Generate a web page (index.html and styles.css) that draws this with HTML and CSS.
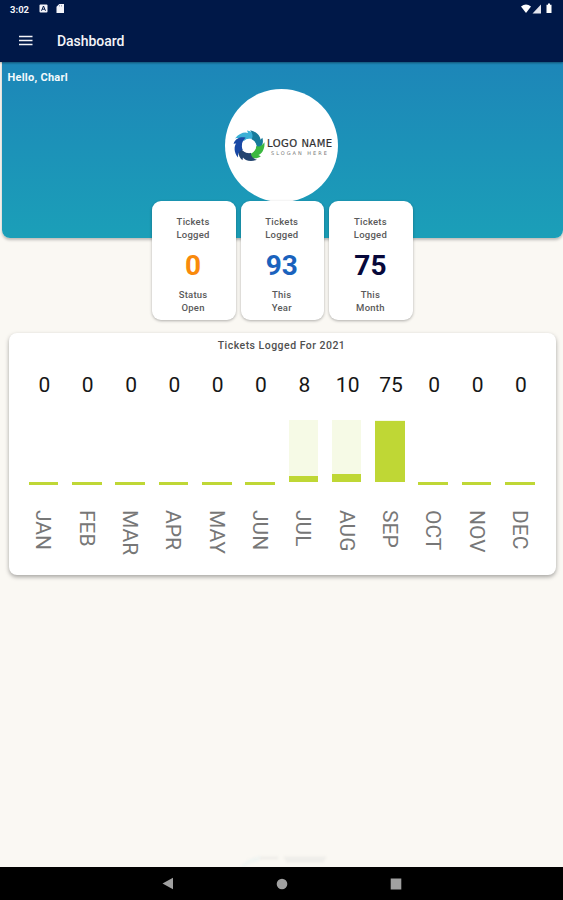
FILE: index.html
```html
<!DOCTYPE html>
<html lang="en">
<head>
<meta charset="utf-8">
<title>Dashboard</title>
<link rel="stylesheet" href="styles.css">
</head>
<body>
<header class="appbar">
  <div class="status">
    <span class="clock">3:02</span>
    <svg class="status-left" width="28" height="12" viewBox="0 0 28 12">
      <rect x="0.5" y="1.5" width="8" height="8" rx="1" fill="#f3f4fa"/>
      <path d="M2.5 7.8 4.5 3 6.5 7.8M3.2 6.2h2.6" fill="none" stroke="#001848"/>
      <path d="M17.5 3.7 20.3 1H25v9h-7.500z" fill="#f3f4fa"/>
      <path d="M20.500 2v1.500M22.500 2v1.500" stroke="#8088a5" stroke-width=".7"/>
    </svg>
    <svg class="status-right" width="34" height="12" viewBox="0 0 34 12">
      <path d="M2 3.500Q7-.5 12 3.500L7 10z" fill="#fff"/>
      <path d="M13.500 10.500 22 1.500v9z" fill="#e3e5ee"/>
      <path d="M27.500 1.800h1.500V.5h2v1.300h1.500v8.200h-5z" fill="#fff"/>
    </svg>
  </div>
  <div class="toolbar">
    <svg width="14" height="11" viewBox="0 0 14 11"><path d="M0 1.500h13.500M0 5.500h13.500M0 9.500h13.500" stroke="#f4f4f8" stroke-width="1.500"/></svg>
    <h1>Dashboard</h1>
  </div>
</header>
<main>
  <section class="hero">
    <p class="hello">Hello, Charl</p>
    <div class="avatar">
      <svg class="swirl" width="32" height="32" viewBox="-16 -16 32 32">
        <path fill="#3ab0d6" d="M-14-7.500C-10-13-4-14.500-1-13L-2-15.500C4-15 7-10 7-5.500C3-8-2-8-5-4.500C-7-8-10-8.500-14-7.500z"/>
        <path fill="#167b9a" transform="rotate(66)" d="M-14-7.500C-10-13-4-14.500-1-13L-2-15.500C4-15 7-10 7-5.500C3-8-2-8-5-4.500C-7-8-10-8.500-14-7.500z"/>
        <path fill="#3cb840" transform="rotate(138)" d="M-14-7.500C-10-13-4-14.500-1-13L-2-15.500C4-15 7-10 7-5.500C3-8-2-8-5-4.500C-7-8-10-8.500-14-7.500z"/>
        <path fill="#25456f" transform="rotate(212)" d="M-14-7.500C-10-13-4-14.500-1-13L-2-15.500C4-15 7-10 7-5.500C3-8-2-8-5-4.500C-7-8-10-8.500-14-7.500z"/>
        <path fill="#1948a5" transform="rotate(286)" d="M-14-7.500C-10-13-4-14.500-1-13L-2-15.500C4-15 7-10 7-5.500C3-8-2-8-5-4.500C-7-8-10-8.500-14-7.500z"/>
        <circle r="7.200" fill="#fff"/>
      </svg>
      <div class="brand"><b>LOGO NAME</b><span>SLOGAN HERE</span></div>
    </div>
  </section>
  <section class="stats">
    <article><p>Tickets<br>Logged</p><strong class="open">0</strong><p>Status<br>Open</p></article>
    <article><p>Tickets<br>Logged</p><strong class="year">93</strong><p>This<br>Year</p></article>
    <article><p>Tickets<br>Logged</p><strong class="month">75</strong><p>This<br>Month</p></article>
  </section>
  <section class="chart">
    <h2>Tickets Logged For 2021</h2>
    <div class="months">
      <div class="col"><span class="val">0</span><div class="bar zero"></div><span class="name">JAN</span></div>
      <div class="col"><span class="val">0</span><div class="bar zero"></div><span class="name">FEB</span></div>
      <div class="col"><span class="val">0</span><div class="bar zero"></div><span class="name">MAR</span></div>
      <div class="col"><span class="val">0</span><div class="bar zero"></div><span class="name">APR</span></div>
      <div class="col"><span class="val">0</span><div class="bar zero"></div><span class="name">MAY</span></div>
      <div class="col"><span class="val">0</span><div class="bar zero"></div><span class="name">JUN</span></div>
      <div class="col"><span class="val">8</span><div class="bar"><i style="height:6.500px"></i></div><span class="name">JUL</span></div>
      <div class="col"><span class="val">10</span><div class="bar"><i style="height:8px"></i></div><span class="name">AUG</span></div>
      <div class="col"><span class="val">75</span><div class="bar"><i style="height:61px"></i></div><span class="name">SEP</span></div>
      <div class="col"><span class="val">0</span><div class="bar zero"></div><span class="name">OCT</span></div>
      <div class="col"><span class="val">0</span><div class="bar zero"></div><span class="name">NOV</span></div>
      <div class="col"><span class="val">0</span><div class="bar zero"></div><span class="name">DEC</span></div>
    </div>
  </section>
</main>
<div class="watermark">
  <svg width="88" height="14" viewBox="0 0 88 14"><path d="M0 14Q9 4 21 3L18 9Q10 9 5 14z" fill="#f0f4f1"/><path d="M20 5h18M44 5h42M46 8h38" stroke="#efeeea" stroke-width="3"/></svg>
</div>
<nav class="navbar">
  <svg width="12" height="13" viewBox="0 0 12 13"><path d="M.5 6.500 11 .7v11.600z" fill="#a0a0a0"/></svg>
  <svg width="12" height="12" viewBox="0 0 12 12"><circle cx="6" cy="6" r="5.300" fill="#a0a0a0"/></svg>
  <svg width="12" height="12" viewBox="0 0 12 12"><path d="M.7.500h10.600v11H.7z" fill="#a0a0a0"/></svg>
</nav>
</body>
</html>
```
FILE: styles.css
```css
* { box-sizing: border-box; }
body {
  margin: 0;
  height: 900px;
  display: flex;
  flex-direction: column;
  background: #faf8f3;
  font-family: Roboto, "Liberation Sans", sans-serif;
  overflow: hidden;
}
h1, h2, p { margin: 0; }
svg { display: block; flex: none; }
.appbar { height: 62px; background: #001848; color: #f4f4f8; box-shadow: 0 1px 2px rgba(0, 0, 0, .4); z-index: 1; }
.status { height: 18px; display: flex; align-items: center; padding: 0 10px; }
.clock { width: 29px; font-size: 9.500px; font-weight: 700; }
.status-right { margin-left: auto; }
.toolbar { height: 44px; display: flex; align-items: center; padding-left: 19px; gap: 24px; }
.toolbar h1 { font-size: 14px; font-weight: 500; letter-spacing: -.05px; line-height: 18px; padding-top: 1px; }
main { flex: 1; }
.hero {
  height: 176px;
  margin-left: 2px;
  padding: 8px 0 0 5px;
  border-radius: 0 0 8px 8px;
  background: linear-gradient(#1d86b8, #1b9fb8);
  box-shadow: 0 2px 3px rgba(0, 0, 0, .25);
}
.hello { color: #f4fafc; font-size: 11px; font-weight: 700; line-height: 15px; letter-spacing: .25px; padding-left: .5px; }
.avatar {
  width: 113px;
  height: 113px;
  margin: 4px auto 0 218px;
  border-radius: 50%;
  background: #fff;
  display: flex;
  align-items: center;
  padding-left: 8px;
}
.brand { color: #303030; font-family: "DejaVu Sans", sans-serif; width: 68px; white-space: nowrap; margin: 3px 0 0 2px; }
.brand b { display: block; font-size: 10px; font-weight: 400; letter-spacing: .5px; line-height: 11px; -webkit-text-stroke: .2px #303030; }
.brand span { display: block; font-size: 5px; line-height: 8px; letter-spacing: 2px; padding-left: 4px; color: #777; }
.stats { display: grid; grid-template-columns: repeat(3, 83.500px); gap: 5.200px; justify-content: center; margin-top: -37px; padding-left: 2px; position: relative; }
.stats article {
  height: 119px;
  padding: 14px 1.500px 0 0;
  text-align: center;
  background: #fff;
  border-radius: 9px;
  box-shadow: 0 1px 3px rgba(0, 0, 0, .3);
}
.stats p { font-size: 9.500px; line-height: 13.300px; font-weight: 500; letter-spacing: .25px; color: #5a5a5a; }
.stats strong { display: block; font-size: 28px; line-height: 30px; margin: 9px 0 7px; font-weight: 700; }
.open { color: #f98a0b; }
.year { color: #1a62bd; }
.month { color: #07083a; }
.chart {
  height: 242px;
  margin: 13px 7px 0 9px;
  padding-top: 6px;
  background: #fff;
  border-radius: 8px;
  box-shadow: 0 2px 4px rgba(0, 0, 0, .34);
}
.chart h2 { text-align: center; font-size: 10.500px; line-height: 14px; font-weight: 500; letter-spacing: .48px; color: #505050; padding-right: 2px; }
.months { display: grid; grid-template-columns: repeat(12, 43.320px); padding-left: 12.800px; }
.col { display: flex; flex-direction: column; align-items: center; }
.val { margin-top: 20px; font-size: 21px; line-height: 24px; color: #161616; font-weight: 400; padding-left: 2px; }
.bar { width: 29.600px; height: 62px; margin: 23px 0 28px; background: #f6fae6; display: flex; align-items: flex-end; }
.bar i { display: block; width: 100%; background: #bfd735; }
.bar.zero { height: 3px; margin: 85px 0 25px; background: #bfd735; }
.name { writing-mode: vertical-rl; font-size: 21px; line-height: 24px; font-weight: 400; color: #777; }
.watermark { height: 14px; padding-left: 240px; overflow: hidden; }
.watermark svg { filter: blur(1px); }
.navbar { height: 33px; background: #000; display: grid; grid-template-columns: repeat(3, 114px); justify-content: center; justify-items: center; align-items: center; }
```
